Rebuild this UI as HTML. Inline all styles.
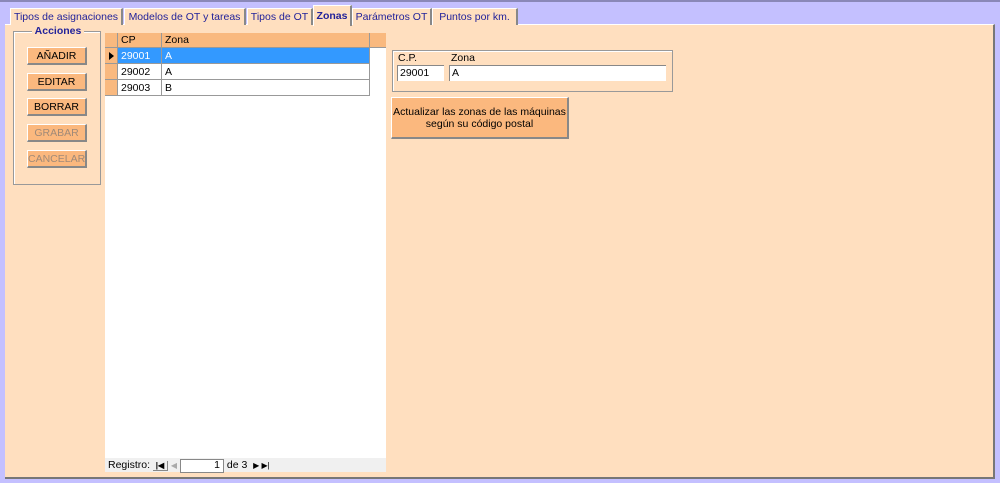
<!DOCTYPE html><html><head><style>
body{margin:0;width:1000px;height:483px;background:#c4c0ff;font-family:"Liberation Sans",sans-serif;font-size:10.5px;position:relative;overflow:hidden}
div{position:absolute;box-sizing:border-box}
.top{left:0;top:0;width:1000px;height:2px;background:#8a88b8}
.panel{left:5px;top:24px;width:990px;height:455px;background:#ffdfbf;border-right:2px solid #777;border-bottom:2px solid #777;border-top:1px solid #fff}
.tab{top:8px;height:17px;background:#ffdfbf;color:#22229a;border-right:2px solid #888;border-top:1px solid #fff;border-left:1px solid #fff;padding:2px 0 0;text-align:center;white-space:nowrap}
.btn{left:27px;width:60px;height:18px;background:#fbb87e;border-right:2px solid #888;border-bottom:2px solid #888;border-top:1px solid #fff;border-left:1px solid #fff;text-align:center;padding-top:2px}
.dis{color:#a08a78}
.cell{height:16px;border-right:1px solid #999;border-bottom:1px solid #999;padding:2px 0 0 3px}
</style></head><body>
<div class="top"></div>
<div class="panel"></div>
<div class="tab" style="left:10px;width:113px">Tipos de asignaciones</div>
<div class="tab" style="left:124px;width:122px">Modelos de OT y tareas</div>
<div class="tab" style="left:247px;width:66px">Tipos de OT</div>
<div class="tab" style="left:313px;top:5px;height:21px;width:39px;font-weight:bold;border-bottom:none;padding-top:4px">Zonas</div>
<div class="tab" style="left:352px;width:80px">Parámetros OT</div>
<div class="tab" style="left:432px;width:86px">Puntos por km.</div>

<div style="left:13px;top:31px;width:88px;height:154px;border:1px solid #999;box-shadow:1px 1px 0 #fff inset"></div>
<div style="left:32px;top:25px;width:52px;background:#ffdfbf;color:#22229a;font-weight:bold;text-align:center">Acciones</div>
<div class="btn" style="top:47px">AÑADIR</div>
<div class="btn" style="top:73px">EDITAR</div>
<div class="btn" style="top:98px">BORRAR</div>
<div class="btn dis" style="top:124px">GRABAR</div>
<div class="btn dis" style="top:150px">CANCELAR</div>

<div style="left:105px;top:33px;width:281px;height:439px;background:#fff"></div>
<div style="left:105px;top:33px;width:281px;height:15px;background:#f9b97f;border-bottom:1px solid #999"></div>
<div class="cell" style="left:105px;top:33px;width:13px;height:15px"></div>
<div class="cell" style="left:118px;top:33px;width:44px;height:15px;padding-top:1px">CP</div>
<div class="cell" style="left:162px;top:33px;width:208px;height:15px;padding-top:1px">Zona</div>
<div class="cell" style="left:105px;top:48px;width:13px;background:#f9b97f"></div>
<div style="left:109px;top:52px;width:0;height:0;border-left:5px solid #000;border-top:4px solid transparent;border-bottom:4px solid transparent"></div>
<div class="cell" style="left:118px;top:48px;width:44px;background:#3399ff;color:#fff">29001</div>
<div class="cell" style="left:162px;top:48px;width:208px;background:#3399ff;color:#fff">A</div>
<div class="cell" style="left:105px;top:64px;width:13px;background:#f9b97f"></div>
<div class="cell" style="left:118px;top:64px;width:44px">29002</div>
<div class="cell" style="left:162px;top:64px;width:208px">A</div>
<div class="cell" style="left:105px;top:80px;width:13px;background:#f9b97f"></div>
<div class="cell" style="left:118px;top:80px;width:44px">29003</div>
<div class="cell" style="left:162px;top:80px;width:208px">B</div>
<div style="left:105px;top:458px;width:281px;height:14px;background:#f0f0f0;padding:1px 0 0 3px;white-space:nowrap">Registro: <span style="display:inline-block;border-bottom:1px solid #888;border-right:1px solid #888;width:14px;text-align:center;font-size:8px;font-weight:bold">|◀</span> <span style="color:#aaa;font-size:8px">◀</span> <span style="display:inline-block;background:#fff;border:1px solid #888;width:42px;text-align:right;height:12px;vertical-align:top;line-height:11px">1&nbsp;</span> de 3 &nbsp;<span style="font-size:8px">▶ ▶|</span></div>

<div style="left:392px;top:50px;width:281px;height:42px;border:1px solid #999;box-shadow:1px 1px 0 #fff inset"></div>
<div style="left:398px;top:52px">C.P.</div>
<div style="left:451px;top:52px">Zona</div>
<div style="left:397px;top:65px;width:47px;height:16px;background:#fff;border-top:1px solid #888;border-left:1px solid #888;padding:1px 2px">29001</div>
<div style="left:449px;top:65px;width:217px;height:16px;background:#fff;border-top:1px solid #888;border-left:1px solid #888;padding:1px 2px">A</div>
<div style="left:391px;top:97px;width:178px;height:42px;background:#fbb87e;border-right:2px solid #888;border-bottom:2px solid #888;border-top:1px solid #fff;border-left:1px solid #fff;text-align:center;padding-top:8px;line-height:12px">Actualizar las zonas de las máquinas<br>según su código postal</div>
</body></html>
